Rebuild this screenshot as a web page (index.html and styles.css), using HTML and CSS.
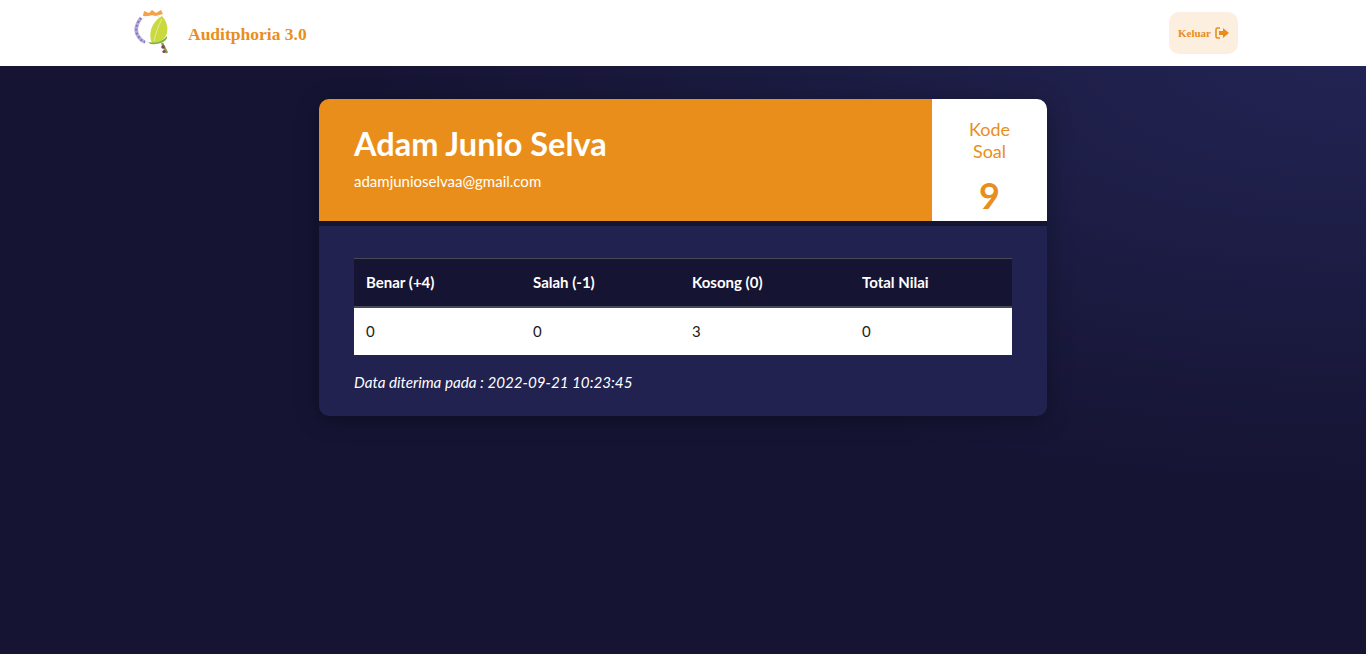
FILE: index.html
```html
<!DOCTYPE html>
<html lang="en">
<head>
<meta charset="UTF-8">
<meta name="viewport" content="width=device-width, initial-scale=1.0">
<title>Auditphoria 3.0</title>
<link rel="stylesheet" href="styles.css">
</head>

<body>
<nav class="navbar">
    <a class="brand" href="#">
        <svg class="brand-logo" width="36" height="46" viewBox="0 0 36 46">
            <circle cx="18" cy="21" r="14" fill="#fff" stroke="#eee8f2" stroke-width="1"/>
            <path d="M9 8l1-5 5 2 3-3 4 3 5-3 2 4-4 1-3 1-4-1-4 1z" fill="#f3a24a"/>
            <path d="M7 10C3 15 1 21 3 26c2 4 4 7 8 8" fill="none" stroke="#b5a9dd" stroke-width="3.500"/>
            <path d="M7 10C3 15 1 21 3 26c2 4 4 7 8 8" fill="none" stroke="#7d6fbe" stroke-width="2" stroke-dasharray="1.500 2.500"/>
            <path d="M18 35C14 27 17 14 28 8c6 6 7 16 3 21-3 4-8 6-13 6z" fill="#c9d93f"/>
            <path d="M20 33c2-8 4-15 8-22" fill="none" stroke="#e8ec96" stroke-width="1"/>
            <path d="M15 34c6 2 13 0 18-6 1 5-7 9-17 8z" fill="#7fb23a"/>
            <path d="M28 35l5 10" fill="none" stroke="#7fa33c" stroke-width="2.500"/>
            <circle cx="29" cy="39" r="1.800" fill="#8c3a6e"/>
            <circle cx="30" cy="43.500" r="1.600" fill="#8c3a6e"/>
        </svg>
        <span class="brand-name">Auditphoria 3.0</span>
    </a>
    <a class="logout" href="#">
        <span>Keluar</span>
        <svg width="14" height="12" viewBox="0 0 14 12">
            <path d="M5 1H2.500C1.500 1 1 1.500 1 2.500v7C1 10.500 1.500 11 2.500 11H5" fill="none" stroke="#e98e1a" stroke-width="1.600"/>
            <path d="M8 1l6 5-6 5V8H4V4h4z" fill="#e98e1a"/>
        </svg>
    </a>
</nav>

<main class="page">
    <div class="card">
        <div class="card-head">
            <div class="participant">
                <h1>Adam Junio Selva</h1>
                <p>adamjunioselvaa@gmail.com</p>
            </div>
            <div class="code">
                <span class="code-label">Kode Soal</span>
                <span class="code-value">9</span>
            </div>
        </div>
        <div class="card-body">
            <table class="score">
                <thead>
                    <tr>
                        <th class="col-benar">Benar (+4)</th>
                        <th class="col-salah">Salah (-1)</th>
                        <th class="col-kosong">Kosong (0)</th>
                        <th>Total Nilai</th>
                    </tr>
                </thead>
                <tbody>
                    <tr>
                        <td>0</td>
                        <td>0</td>
                        <td>3</td>
                        <td>0</td>
                    </tr>
                </tbody>
            </table>
            <p class="received">Data diterima pada : 2022-09-21 10:23:45</p>
        </div>
    </div>
</main>
</body>
</html>
```

FILE: styles.css
```css
* {
    box-sizing: border-box;
}
html, body {
    height: 100%;
}
body {
    margin: 0;
    font-family: Lato, "Noto Sans", sans-serif;
    background: #151433;
    background-image: radial-gradient(ellipse 1000px 440px at 100% 8%, #232454 0%, #151433 100%);
    background-repeat: no-repeat;
}
.navbar {
    height: 66px;
    background: white;
    display: flex;
    justify-content: space-between;
    align-items: center;
    padding: 0 128px 0 134px;
}
.brand {
    display: flex;
    align-items: center;
    gap: 18px;
    text-decoration: none;
}
.brand-logo {
    margin-top: -4px;
}
.brand-name {
    font-family: "Liberation Serif", serif;
    font-weight: bold;
    font-size: 17.500px;
    margin-top: 2px;
    color: #e98e1a;
}
.logout {
    width: 69px;
    height: 42px;
    margin-top: -1px;
    display: flex;
    align-items: center;
    justify-content: center;
    gap: 4px;
    background: #fdefdf;
    border-radius: 10px;
    font-family: "Liberation Serif", serif;
    font-weight: bold;
    font-size: 11px;
    color: #e98e1a;
    text-decoration: none;
}
.page {
    display: flex;
    justify-content: center;
    padding-top: 33px;
}
.card {
    width: 728px;
    background: #212250;
    border-radius: 10px;
    overflow: hidden;
    box-shadow: 0 4px 24px rgba(0, 0, 0, 0.3);
}
.card-head {
    height: 127px;
    display: flex;
    border-bottom: 5px solid #151433;
}
.participant {
    flex: 1;
    background: #e98e1a;
    color: white;
    padding: 25px 35px;
}
.participant h1 {
    margin: 0;
    font-size: 32.500px;
    font-weight: 700;
    line-height: 40px;
}
.participant p {
    margin: 7px 0 0;
    font-size: 15px;
    line-height: 20px;
}
.code {
    width: 115px;
    background: white;
    color: #e98e1a;
    text-align: center;
    padding: 19px 28px 0;
    display: flex;
    flex-direction: column;
    align-items: center;
}
.code-label {
    font-size: 18px;
    line-height: 22px;
}
.code-value {
    font-size: 36px;
    font-weight: 700;
    line-height: 44px;
    margin-top: 11px;
}
.card-body {
    padding: 32px 35px 0;
}
.score {
    width: 658px;
    border-collapse: collapse;
    table-layout: fixed;
    font-size: 15px;
}
.col-benar {
    width: 167px;
}
.col-salah {
    width: 159px;
}
.col-kosong {
    width: 170px;
}
.score th {
    background: #151433;
    color: white;
    font-weight: 700;
    text-align: left;
    height: 48px;
    padding: 0 12px 1px;
    border-top: 1px solid #454a55;
    border-bottom: 2px solid #454a55;
}
.score td {
    background: white;
    color: #1a1a1a;
    height: 48px;
    padding: 0 12px 1px;
}
.received {
    margin: 17px 0 0;
    padding-bottom: 24px;
    color: white;
    font-size: 15.200px;
    font-style: italic;
    line-height: 20px;
}
```
